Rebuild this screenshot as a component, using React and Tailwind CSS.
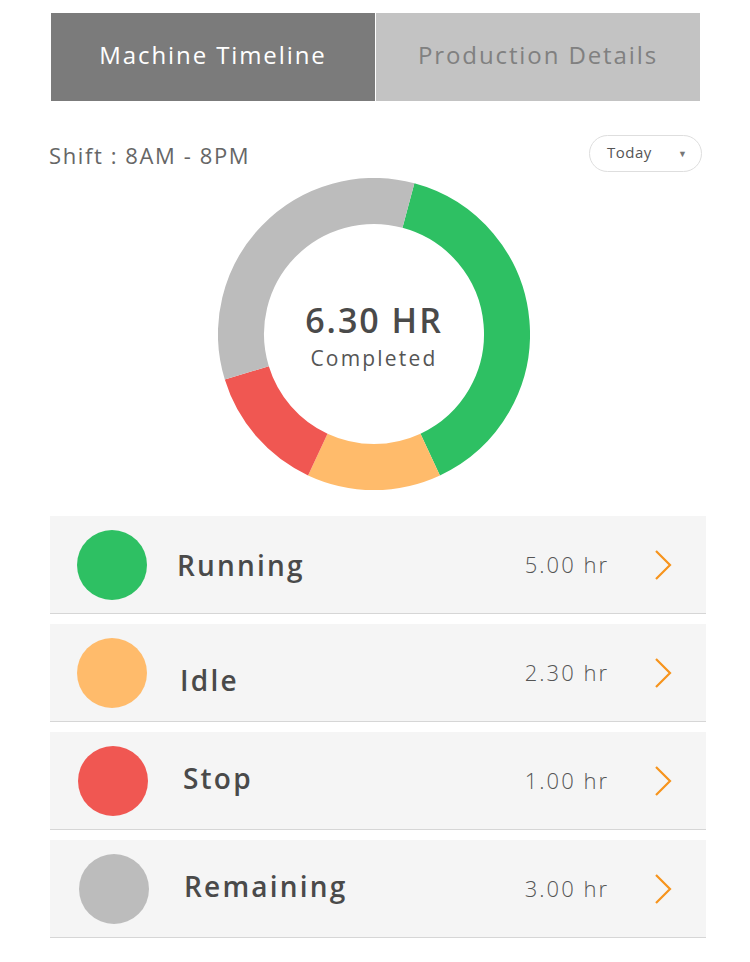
import React from "react";

const font = { fontFamily: '"Open Sans", "Liberation Sans", sans-serif' };

const segments = [
  { from: 15, to: 155, color: "#2ec063" },
  { from: 155, to: 205, color: "#ffbb6b" },
  { from: 205, to: 253, color: "#f05752" },
  { from: 253, to: 375, color: "#bcbcbc" },
];

const rows = [
  { label: "Running", value: "5.00 hr", color: "bg-[#2ec063]", pad: "pl-[27px]", lab: "ml-[30px]" },
  { label: "Idle", value: "2.30 hr", color: "bg-[#ffbb6b]", pad: "pl-[27px]", lab: "ml-[33px] mt-[14px]" },
  { label: "Stop", value: "1.00 hr", color: "bg-[#f05752]", pad: "pl-[28px]", lab: "ml-[35px] mb-[6px]" },
  { label: "Remaining", value: "3.00 hr", color: "bg-[#bcbcbc]", pad: "pl-[29px]", lab: "ml-[35px] mb-[6px]" },
];

function pt(cx, cy, r, deg) {
  const a = (deg * Math.PI) / 180;
  return [cx + r * Math.sin(a), cy - r * Math.cos(a)];
}

function Donut() {
  const cx = 156, cy = 156, r = 133;
  return (
    <svg width="312" height="312" viewBox="0 0 312 312">
      {segments.map((s, i) => {
        const [x1, y1] = pt(cx, cy, r, s.from);
        const [x2, y2] = pt(cx, cy, r, s.to);
        const large = s.to - s.from > 180 ? 1 : 0;
        return (
          <path
            key={i}
            d={`M ${x1} ${y1} A ${r} ${r} 0 ${large} 1 ${x2} ${y2}`}
            fill="none"
            stroke={s.color}
            strokeWidth="46"
          />
        );
      })}
    </svg>
  );
}

function Chevron() {
  return (
    <svg width="20" height="32" viewBox="0 0 20 32">
      <path d="M3 2 L17 16 L3 30" fill="none" stroke="#f7941d" strokeWidth="2.2" />
    </svg>
  );
}

export default function App() {
  return (
    <div className="w-[750px] h-[962px] bg-white overflow-hidden" style={font}>
      {/* tabs */}
      <div className="flex ml-[51px] mt-[13px] w-[649px] h-[88px] gap-px">
        <div className="flex-1 bg-[#7b7b7b] flex items-center justify-center text-white text-[24px] tracking-[1.9px] pb-1">
          Machine Timeline
        </div>
        <div className="flex-1 bg-[#c3c3c3] flex items-center justify-center text-[#808080] text-[24px] tracking-[1.9px] pb-1">
          Production Details
        </div>
      </div>

      {/* shift + dropdown */}
      <div className="flex items-start justify-between ml-[49px] mr-[48px] mt-[34px]">
        <div className="text-[22px] text-[#666] tracking-[1.6px] mt-[4px]">Shift : 8AM - 8PM</div>
        <div className="w-[113px] h-[37px] rounded-full border border-[#dedede] flex items-center pl-[17px] pr-[14px] justify-between">
          <span className="text-[15px] text-[#555] tracking-[0.5px] mb-[3px]">Today</span>
          <span className="text-[9px] text-[#777]">▼</span>
        </div>
      </div>

      {/* donut */}
      <div className="relative w-[312px] h-[312px] ml-[218px] mt-[6px]">
        <Donut />
        <div className="absolute inset-0 flex flex-col items-center justify-center">
          <div className="text-[34px] font-semibold text-[#4a4a4a] leading-none tracking-[2px] mt-[4px]">6.30 HR</div>
          <div className="text-[21px] text-[#555] mt-[11px] leading-none tracking-[2.2px]">Completed</div>
        </div>
      </div>

      {/* rows */}
      <div className="flex flex-col gap-[10px] ml-[50px] mt-[26px] w-[656px]">
        {rows.map((r) => (
          <div
            key={r.label}
            className={`h-[98px] bg-[#f5f5f5] border-b border-[#d6d6d6] flex items-center ${r.pad} pr-[33px]`}
          >
            <div className={`w-[70px] h-[70px] rounded-full ${r.color}`} />
            <div className={`${r.lab} text-[28px] font-semibold text-[#4a4a4a] tracking-[2.2px] flex-1`}>{r.label}</div>
            <div className="text-[22px] text-[#555] font-light tracking-[2px] mr-[44px]">{r.value}</div>
            <Chevron />
          </div>
        ))}
      </div>
    </div>
  );
}
